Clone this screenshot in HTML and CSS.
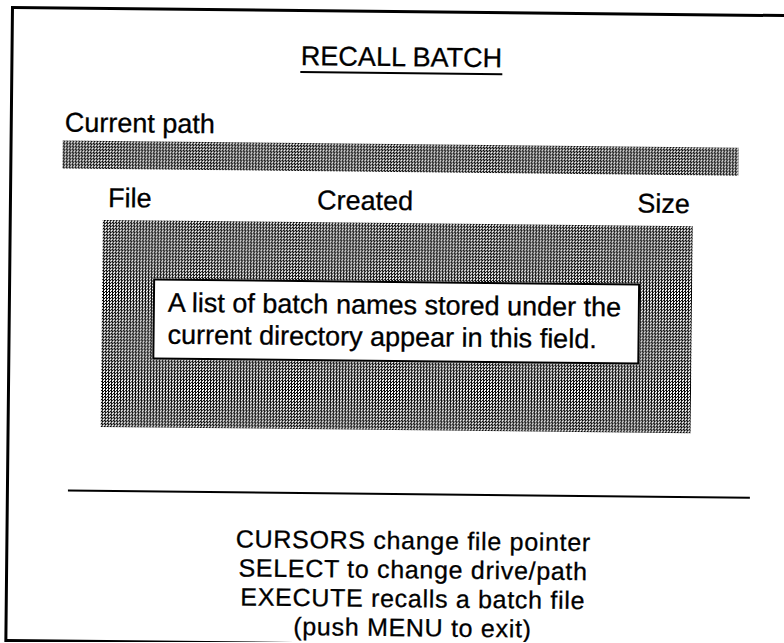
FILE: index.html
```html
<!DOCTYPE html>
<html lang="en">
<head>
    <meta charset="UTF-8">
    <meta name="viewport" content="width=device-width, initial-scale=1.0">
    <title>Recall Batch</title>
    <link rel="stylesheet" href="styles.css">
</head>
<body>
    <div class="frame">
        <h1 class="title"><span>RECALL BATCH</span></h1>

        <div class="path">
            <div class="label">Current path</div>
            <div class="field path-field"></div>
        </div>

        <div class="columns">
            <span>File</span>
            <span>Created</span>
            <span>Size</span>
        </div>

        <div class="field list">
            <div class="note">A list of batch names stored under the<br>current directory appear in this field.</div>
        </div>

        <hr class="rule">

        <div class="help">
            <div>CURSORS change file pointer</div>
            <div>SELECT to change drive/path</div>
            <div>EXECUTE recalls a batch file</div>
            <div>(push MENU to exit)</div>
        </div>
    </div>
</body>
</html>
```

FILE: styles.css
```css
body { margin: 0; overflow: hidden; background: #fff; color: #000; font-family: "Liberation Sans", Arial, sans-serif; font-size: 27px; line-height: 31px; -webkit-text-stroke: 0.3px #000; }

.frame { box-sizing: border-box; width: 806px; height: 636px; margin: 6px 0 0 11px; padding-top: 29px; border: 3px solid #000; display: flex; flex-direction: column; align-items: flex-start; transform: rotate(0.6deg); transform-origin: 0 0; }

.title { margin: 0; width: 776px; font: inherit; text-align: center; }
.title span { border-bottom: 2px solid #000; }

.path { margin: 38px 0 0 50px; }
.label { padding-left: 2px; }

.field { background-color: #fff; background-image: repeating-conic-gradient(#000 0 25%, #fff 0 50%); background-size: 3px 3px; }
.path-field { width: 676px; height: 28px; margin-top: 2px; }

.columns { display: grid; grid-template-columns: 209px 1fr auto; width: 582px; margin: 14px 0 0 96px; }

.list { box-sizing: border-box; width: 590px; height: 207px; margin: 6px 0 0 91px; padding: 58px 0 0 51px; }
.note { box-sizing: border-box; width: 487px; padding: 6px 0 7px 13px; border: 2px solid #000; background: #fff; line-height: 32px; }

.rule { width: 682px; height: 2px; margin: 63px 0 0 59px; border: 0; background: #000; }

.help { width: 790px; margin: 31px 0 0 10px; font-size: 25px; line-height: 29px; letter-spacing: 0.7px; text-align: center; }
```
